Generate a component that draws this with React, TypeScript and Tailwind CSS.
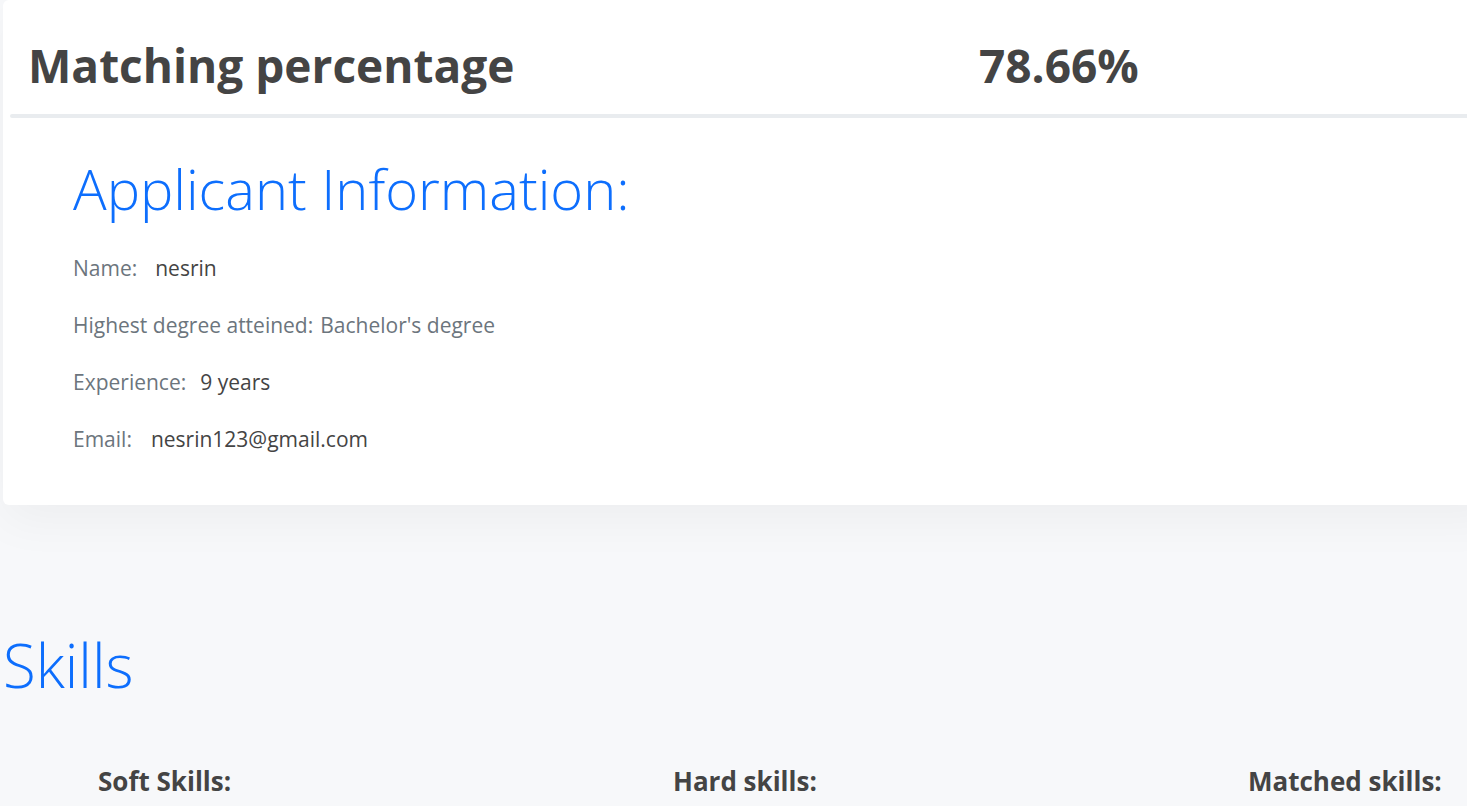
const applicant = {
  name: 'nesrin',
  degree: "Bachelor's degree",
  experience: '9 years',
  email: 'nesrin123@gmail.com',
};

function InfoLine({ label, value, gap, muted, last }: { label: string; value: string; gap: string; muted?: boolean; last?: boolean }) {
  return (
    <p className={`${last ? '' : 'mb-[27px]'} text-[21px] leading-[30px] text-[#6c757d]`}>
      {label}
      <span className={`${gap} ${muted ? 'text-[#6c757d]' : 'text-[#444]'}`}>{value}</span>
    </p>
  );
}

export default function App() {
  return (
    <div className="min-h-screen overflow-hidden bg-[#f7f8fa] font-['Open_Sans',sans-serif]">
      <div className="ml-[3px] w-[1500px] rounded-md bg-white shadow-[0_1rem_3rem_rgba(0,0,0,0.045)] pb-[51px]">
        <div className="flex h-[114px] pl-[25px] pt-[38px] text-[46px] font-bold leading-[1.2] text-[#444]">
          <span className="w-[951px] shrink-0">Matching percentage</span>
          <span>78.66%</span>
        </div>
        <div className="ml-[7px] h-[4px] rounded-full bg-[#e9ecef]" />
        <div className="pl-[70px] pt-[37px]">
          <h1 className="mb-[31px] text-[56px] font-light leading-[1.2] text-[#0d6efd]">Applicant Information:</h1>
          <InfoLine label="Name:" value={applicant.name} gap="ml-[18px]" />
          <InfoLine label="Highest degree atteined:" value={applicant.degree} gap="ml-[7px]" muted />
          <InfoLine label="Experience:" value={applicant.experience} gap="ml-[14px]" />
          <InfoLine label="Email:" value={applicant.email} gap="ml-[19px]" last />
        </div>
      </div>

      <h2 className="ml-[3px] mt-[124px] text-[60px] font-light leading-[1.2] text-[#0d6efd]">Skills</h2>

      <div className="mt-[65px] flex pl-[98px] text-[26px] font-bold leading-[1.2] text-[#444]">
        <div className="w-[575px] shrink-0">Soft Skills:</div>
        <div className="w-[575px] shrink-0">Hard skills:</div>
        <div className="w-[575px] shrink-0">Matched skills:</div>
      </div>
    </div>
  );
}
